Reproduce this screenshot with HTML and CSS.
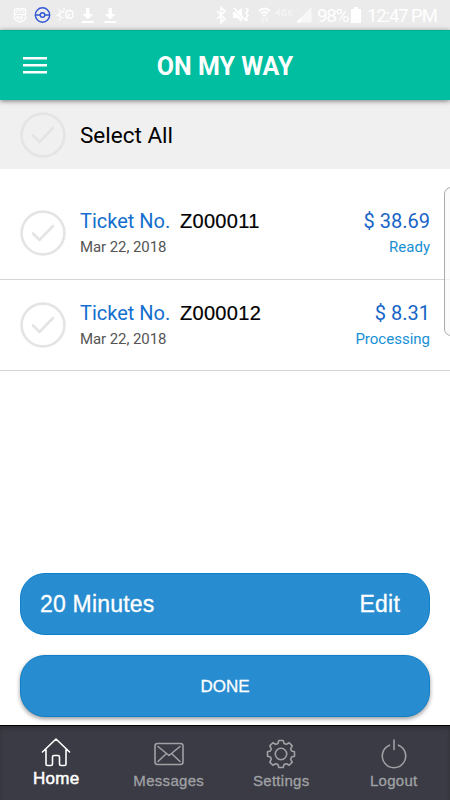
FILE: index.html
```html
<!DOCTYPE html>
<html lang="en">
<head>
<meta charset="utf-8">
<title>On My Way</title>
<link rel="stylesheet" href="styles.css">
</head>
<body>
<div class="status">
  <svg class="status-left" width="120" height="30" viewBox="0 0 120 30" fill="none" stroke="#fff">
    <path d="M14.500 9.500l2-.8 3.500.8 3.500-.8 2 .8V18q0 2-5.500 4.200Q14.500 20 14.500 18Z" stroke-width="1.300"/>
    <path d="M15 14.500h10M17 10v3m3-3v3m3-3v3M17 19v-3l2 3v-3m2 4v-4h2m-2 2h2" stroke-width="1"/>
    <g stroke="#3157d4" stroke-width="1.400"><circle cx="42.500" cy="15" r="7.200"/><circle cx="42.500" cy="15" r="2.300"/><path d="M35.500 15h4.700m4.600 0h4.700"/></g>
    <path d="M63.500 17.500a3 3 0 1 1 .8-5M70.500 14.500q-2.300-.3-2.300 1.800 0 2 2.300 2 2.500-.3 2.500-3.800 0-4-3.500-4-3.300 0-3.700 3.500-.5 4 3 4.300M59 9.500l1.300 1.500M56.500 15h2m.5 5.500l1.300-1.500M64 8.300v2" stroke-width="1.300"/>
    <path fill="#fff" stroke="none" d="M86 8h3.500v6H93l-5.250 5.500L82.500 14H86zM108.500 8h3.500v6h3.500l-5.250 5.500L105 14h3.500zM82 21h11.500v2H82zM104.500 21H116v2h-11.500z"/>
  </svg>
  <svg class="status-right" width="101" height="30" viewBox="214 0 101 30" fill="none" stroke="#fff">
    <path d="M217 11l8 8-4 3.500V7.500l4 3.500-8 8" stroke-width="1.700"/>
    <path fill="#fff" stroke="none" d="M233 12h4l5-4v14l-5-4h-4z"/>
    <path d="M233 9l12 12.500" stroke="#ebebeb"/><path d="M234 8l12 13M246 8l2 2-2 3 2 2-2 3 2 3" stroke-width="1.700"/>
    <path d="M259 11q5.500-5 11 0M261 13.500q3.500-3 7 0M263 16q1.500-1.500 3 0" stroke-width="1.800"/>
    <path d="M262.500 18v4m4-4v4" stroke-width="2" opacity=".5"/>
    <g opacity=".55"><path d="M279 16V9.500l-3 4h4M286 10.500q-4-2-4 2.500t4 2v-2h-2M293 10h-4v5h4m-4-2.500h3" stroke-width="1.200"/></g>
    <path d="M296 22.500L311.500 7v15.500z" fill="#f7f7f7" stroke="none"/><path d="M296 22.500l5-5v5z" fill="#fff" stroke="none"/>
  </svg>
  <span class="percent">98%</span>
  <svg class="battery" width="10" height="16" viewBox="0 0 10 16"><path fill="#fff" d="M3 0h4v2h3v14H0V2h3z"/></svg>
  <span class="time">12:47 PM</span>
</div>
<header class="header">
  <svg class="menu" width="24" height="17" viewBox="0 0 24 17" fill="#fff"><path d="M0 0h24v2.500H0zM0 7h24v2.500H0zM0 14h24v2.500H0z"/></svg>
  <h1>ON MY WAY</h1>
</header>
<main>
  <div class="select-all">
    <svg class="check" viewBox="0 0 46 46"><circle cx="23" cy="23" r="21.400"/><path d="M13 23.500l6.500 6.500L33 16"/></svg>
    <span>Select All</span>
  </div>
  <div class="list">
    <div class="ticket">
      <svg class="check" viewBox="0 0 46 46"><circle cx="23" cy="23" r="21.400"/><path d="M13 23.500l6.500 6.500L33 16"/></svg>
      <div class="info"><div class="line"><span class="label">Ticket No.</span><span class="number">Z000011</span></div><div class="date">Mar 22, 2018</div></div>
      <div class="amount"><div class="price">$ 38.69</div><div class="state">Ready</div></div>
    </div>
    <div class="ticket">
      <svg class="check" viewBox="0 0 46 46"><circle cx="23" cy="23" r="21.400"/><path d="M13 23.500l6.500 6.500L33 16"/></svg>
      <div class="info"><div class="line"><span class="label">Ticket No.</span><span class="number">Z000012</span></div><div class="date">Mar 22, 2018</div></div>
      <div class="amount"><div class="price">$ 8.31</div><div class="state">Processing</div></div>
    </div>
    <div class="edge-handle"></div>
  </div>
  <div class="actions">
    <div class="button duration"><span class="minutes">20 Minutes</span><span class="edit">Edit</span></div>
    <div class="button done"><span>DONE</span></div>
  </div>
</main>
<nav class="tabs">
  <div class="tab active">
    <svg width="32" height="32" viewBox="0 0 32 32"><path d="M2.500 16L16 3l13.500 13M6 13.500V28q0 1.500 1.500 1.500h3.500q1.500 0 1.500-1.500v-7q0-1.500 1.500-1.500h4q1.500 0 1.500 1.500v7q0 1.500 1.500 1.500h3.500q1.500 0 1.500-1.500V13.500"/></svg>
    <span>Home</span>
  </div>
  <div class="tab messages">
    <svg width="32" height="32" viewBox="0 0 32 32"><rect x="2" y="5.500" width="28" height="21" rx="2.500"/><path d="M5 8.500l11 9 11-9M5 23.500l8.500-8M27 23.500l-8.500-8"/></svg>
    <span>Messages</span>
  </div>
  <div class="tab settings">
    <svg width="32" height="32" viewBox="-16 -16 32 32"><path d="M-2.200-13.500H2.200L3-10.700Q4-9.800 5.440-9.690L8.130-11.240 11.240-8.130 9.690-5.440Q9.800-4 10.700-3L13.500-2.200V2.200L10.700 3Q9.800 4 9.690 5.440L11.240 8.130 8.130 11.240 5.440 9.690Q4 9.800 3 10.700L2.200 13.500H-2.200L-3 10.700Q-4 9.800-5.440 9.690L-8.130 11.240-11.240 8.130-9.690 5.440Q-9.800 4-10.700 3L-13.500 2.200V-2.200L-10.700-3Q-9.800-4-9.690-5.440L-11.240-8.130-8.130-11.240-5.440-9.690Q-4-9.800-3-10.700Z"/><circle r="5.700"/></svg>
    <span>Settings</span>
  </div>
  <div class="tab logout">
    <svg width="32" height="32" viewBox="0 0 32 32"><path d="M11.500 7.200a11.700 11.700 0 1 0 9 0M16 2v9.500"/></svg>
    <span>Logout</span>
  </div>
</nav>
</body>
</html>
```
FILE: styles.css
```css
* { box-sizing: border-box; }
body {
  margin: 0;
  width: 450px;
  height: 800px;
  overflow: hidden;
  display: flex;
  flex-direction: column;
  background: #fff;
  font-family: Roboto, sans-serif;
  color: #000;
}
svg { display: block; flex: none; }

.status {
  height: 30px;
  flex: none;
  display: flex;
  align-items: center;
  background: #ebebeb;
  color: #fff;
  font-size: 19px;
  line-height: 30px;
  white-space: nowrap;
}
.status-right { margin-left: 94px; }
.percent { width: 34px; margin-left: 2px; padding-top: 2px; letter-spacing: -1.4px; }
.time { margin-left: 6px; padding-top: 2px; font-size: 18.500px; letter-spacing: -1.1px; }
.percent + .battery { margin-left: 0; }

.header {
  height: 70px;
  flex: none;
  display: grid;
  grid-template-columns: 1fr auto 1fr;
  align-items: center;
  padding: 0 23px;
  background: #00be9f;
  border-top: 1px solid #00b294;
  box-shadow: 0 1px 5px rgba(0, 0, 0, .5);
  z-index: 1;
}
.header h1 {
  margin: 2px 0 0;
  font-size: 25px;
  line-height: 30px;
  font-weight: 700;
  color: #fff;
}

main { flex: 1; display: flex; flex-direction: column; }
.check {
  width: 46px;
  height: 46px;
  fill: none;
  stroke: #e4e4e4;
  stroke-width: 2.6;
  stroke-linecap: round;
}
.select-all {
  height: 69px;
  display: flex;
  align-items: center;
  gap: 14px;
  padding-left: 20px;
  background: #f0f0f0;
  font-size: 22.500px;
}
.list { position: relative; padding-top: 19px; }
.ticket {
  height: 91.500px;
  display: flex;
  align-items: center;
  padding: 0 20px;
  border-bottom: 1px solid #d4d4d4;
}
.info { margin-left: 14px; padding-top: 2px; flex: 1; }
.line { display: flex; line-height: 26px; font-size: 20px; }
.label { width: 100px; color: #146fce; }
.number { font-family: "Liberation Sans", sans-serif; letter-spacing: .3px; -webkit-text-stroke: .2px; }
.date { font-size: 15px; line-height: 26px; letter-spacing: -.08px; color: #555; }
.amount { padding-top: 2px; text-align: right; }
.price { font-size: 20px; line-height: 26px; color: #1765c6; }
.state { font-size: 15px; line-height: 26px; color: #178fd5; }
.edge-handle {
  position: absolute;
  right: -8px;
  top: 18px;
  width: 14px;
  height: 149px;
  border: 1px solid #aaa;
  border-radius: 7px;
  background: rgba(250, 250, 250, .75);
}

.actions {
  margin-top: auto;
  padding: 0 20px 8px;
  display: flex;
  flex-direction: column;
  gap: 20px;
  font-family: "Liberation Sans", sans-serif;
}
.button {
  height: 62px;
  display: flex;
  align-items: center;
  border: 1px solid #0e80c9;
  border-radius: 25px;
  background: #288dd0;
  color: #fff;
  -webkit-text-stroke: .3px;
}
.duration { justify-content: space-between; padding: 0 29px 0 19px; font-size: 23px; letter-spacing: .2px; }
.done { justify-content: center; padding-top: 2px; font-size: 17px; box-shadow: 0 2px 4px rgba(0, 0, 0, .4); }

.tabs {
  height: 75px;
  flex: none;
  display: grid;
  grid-template-columns: repeat(4, 1fr);
  background: #3a3b44;
  border-top: 1px solid #000;
  box-shadow: inset 0 3px 3px #303038;
  font-family: "Liberation Sans", sans-serif;
}
.tab {
  display: flex;
  flex-direction: column;
  align-items: center;
  padding-top: 12px;
  color: #a0a1a5;
  font-size: 15px;
  line-height: 18px;
  letter-spacing: .3px;
  -webkit-text-stroke: .3px;
}
.tab svg { fill: none; stroke: currentColor; stroke-width: 1.6; stroke-linejoin: round; stroke-linecap: round; }
.tab span { margin-top: 2px; }
.active { padding-top: 10px; color: #fff; font-size: 17px; }
.active span { margin-top: 2px; -webkit-text-stroke: .5px; }
```
